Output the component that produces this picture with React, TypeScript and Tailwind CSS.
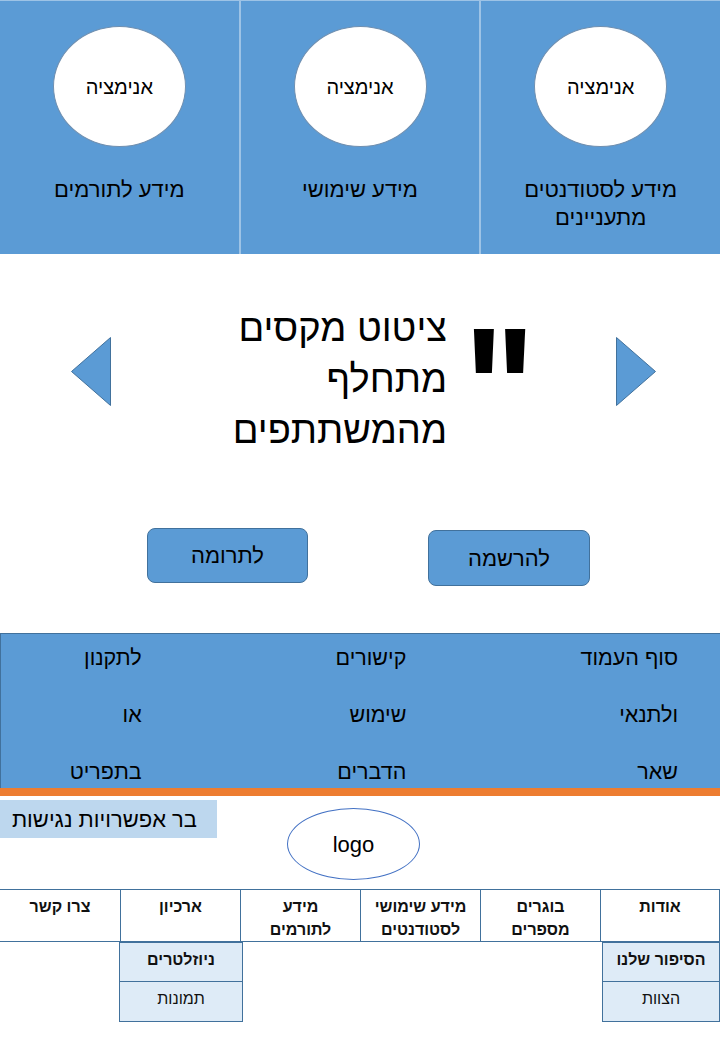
import React from 'react'

const topCards = [
  { id: 'students', label: ['מידע לסטודנטים', 'מתעניינים'] },
  { id: 'useful', label: ['מידע שימושי'] },
  { id: 'donors', label: ['מידע לתורמים'] },
]

const footerCols = [
  { pad: 'pr-[42px]', lines: ['סוף העמוד', 'ולתנאי', 'שאר'] },
  { pad: 'pr-[74px]', lines: ['קישורים', 'שימוש', 'הדברים'] },
  { pad: 'pr-[99px]', lines: ['לתקנון', 'או', 'בתפריט'] },
]

const navItems = [
  ['אודות'],
  ['בוגרים', 'מספרים'],
  ['מידע שימושי', 'לסטודנטים'],
  ['מידע', 'לתורמים'],
  ['ארכיון'],
  ['צרו קשר'],
]

function Triangle({ dir }: { dir: 'left' | 'right' }) {
  const points = dir === 'left' ? '39.5,0.5 0.5,34.5 39.5,68.5' : '0.5,0.5 39.5,34.5 0.5,68.5'
  return (
    <svg width="40" height="69" viewBox="0 0 40 69" className="shrink-0">
      <polygon points={points} fill="#5b9bd5" stroke="#41719c" strokeWidth="1" />
    </svg>
  )
}

function Dropdown({ items }: { items: string[] }) {
  return (
    <div className="flex flex-col">
      {items.map((item, i) => (
        <div
          key={item}
          className={`flex h-[40px] justify-center border border-[#41719c] bg-[#deebf7] pt-[6px] text-[16px] leading-[22px] text-[#111] ${
            i === 0 ? 'font-bold' : 'border-t-0'
          }`}
        >
          {item}
        </div>
      ))}
    </div>
  )
}

export default function App() {
  return (
    <div dir="rtl" className="h-[1040px] w-[720px] overflow-hidden bg-white font-['Liberation_Sans','DejaVu_Sans',sans-serif] text-black">
      {/* Top info cards */}
      <section className="grid h-[254px] grid-cols-3 gap-[2px] bg-[#9dc3e6] pt-[1px]">
        {topCards.map((card) => (
          <div key={card.id} className="flex flex-col items-center bg-[#5b9bd5]">
            <div className="mt-[25px] flex h-[121px] w-[133px] items-center justify-center rounded-[50%] border border-[#6f8fb0] bg-white text-[20px]">
              אנימציה
            </div>
            <div className="mt-[29px] text-center text-[22px] leading-[28px]">
              {card.label.map((line) => (
                <div key={line}>{line}</div>
              ))}
            </div>
          </div>
        ))}
      </section>

      {/* Quote carousel + actions */}
      <section className="h-[379px] pt-[46px]">
        <div className="flex h-[150px] items-start pr-[64px] pl-[71px]">
          <div className="mt-[37px]">
            <Triangle dir="right" />
          </div>
          <div className="mt-[30px] mr-[81px] h-[44px] w-[71px] shrink-0 overflow-visible">
            <div className="-mt-[30px] origin-top scale-y-[1.18] text-center text-[150px] leading-none font-bold" dir="ltr">
              "
            </div>
          </div>
          <div className="mt-[3px] mr-[17px] text-[38px] leading-[51px]">
            ציטוט מקסים
            <br />
            מתחלף
            <br />
            מהמשתתפים
          </div>
          <div className="ms-auto mt-[37px]">
            <Triangle dir="left" />
          </div>
        </div>

        <div className="mt-[78px] flex items-start gap-[120px] pr-[130px]">
          <button className="mt-[2px] flex h-[56px] w-[162px] items-center justify-center rounded-lg border border-[#41719c] bg-[#5b9bd5] text-[22px]">
            להרשמה
          </button>
          <button className="flex h-[55px] w-[161px] items-center justify-center rounded-lg border border-[#41719c] bg-[#5b9bd5] text-[22px]">
            לתרומה
          </button>
        </div>
      </section>

      {/* Footer links */}
      <footer className="h-[155px] border-t border-l border-[#41719c] bg-[#5b9bd5] pt-[10px]">
        <div className="grid grid-cols-3">
          {footerCols.map((col) => (
            <div key={col.lines[0]} className={`flex flex-col gap-[29px] text-[21.5px] leading-[28px] ${col.pad}`}>
              {col.lines.map((line) => (
                <div key={line}>{line}</div>
              ))}
            </div>
          ))}
        </div>
      </footer>
      <div className="h-[8px] bg-[#ed7d31]" />

      {/* Header: accessibility + logo */}
      <div dir="ltr" className="flex h-[93px] items-start pt-[4px]">
        <div dir="rtl" className="flex h-[38px] w-[217px] items-center bg-[#bdd7ee] pr-[20px] text-[22px]">
          בר אפשרויות נגישות
        </div>
        <div className="mt-[8px] ml-[70px] flex h-[72px] w-[133px] items-center justify-center rounded-[50%] border border-[#4472c4] text-[22px]">
          logo
        </div>
      </div>

      {/* Navigation */}
      <nav className="grid h-[53px] grid-cols-6 border-t border-b border-[#41719c]">
        {navItems.map((item, i) => (
          <div
            key={item.join(' ')}
            className={`flex flex-col items-center pt-[5px] text-[16px] leading-[23px] font-bold text-[#111] ${
              i < 5 ? 'border-l border-[#41719c]' : ''
            } ${i === 0 ? 'border-r' : ''}`}
          >
            {item.map((line) => (
              <div key={line}>{line}</div>
            ))}
          </div>
        ))}
      </nav>
      <div className="grid grid-cols-6">
        <div className="ml-[2px]">
          <Dropdown items={['הסיפור שלנו', 'הצוות']} />
        </div>
        <div />
        <div />
        <div />
        <div className="-mr-[3px] -ml-[1px]">
          <Dropdown items={['ניוזלטרים', 'תמונות']} />
        </div>
        <div />
      </div>
    </div>
  )
}
